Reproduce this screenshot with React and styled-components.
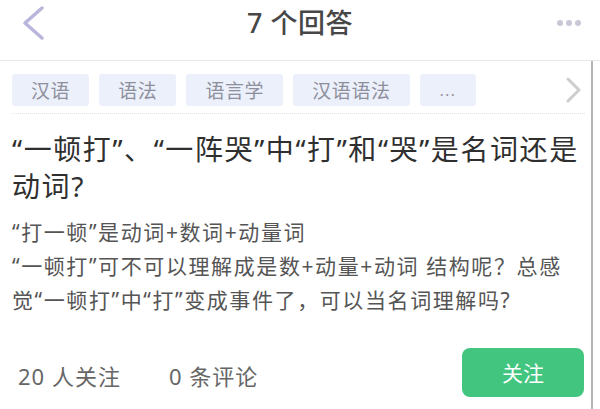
import React from "react";
import styled, { createGlobalStyle } from "styled-components";

const GlobalStyle = createGlobalStyle`
  html, body {
    margin: 0;
    padding: 0;
    background: #ffffff;
  }
  body {
    font-family: "Noto Sans", "Noto Sans CJK SC", sans-serif;
    overflow: hidden;
  }
`;

const Page = styled.div`
  width: 600px;
  height: 409px;
  display: flex;
  flex-direction: column;
  background: #fff;
`;

const Header = styled.header`
  height: 60px;
  flex-shrink: 0;
  display: grid;
  grid-template-columns: 80px 1fr 80px;
  align-items: center;
  border-bottom: 1px solid #e8e8e8;
`;

const BackButton = styled.div`
  padding-left: 22px;
  margin-top: -14px;
  display: flex;
  align-items: center;
`;

const Title = styled.h1`
  margin: -14px 0 0;
  text-align: center;
  font-size: 27px;
  font-weight: 500;
  color: #474747;
  line-height: 60px;
  letter-spacing: 0.5px;
`;

const More = styled.div`
  display: flex;
  justify-content: flex-end;
  gap: 3px;
  padding-right: 19px;
  margin-top: -14px;
  span {
    width: 6px;
    height: 6px;
    border-radius: 50%;
    background: #c9c8d6;
  }
`;

const Main = styled.main`
  flex: 1;
  width: 579px;
  padding-left: 12px;
  border-right: 2px solid #b4b4b4;
  display: flex;
  flex-direction: column;
`;

const TagRow = styled.div`
  display: flex;
  align-items: center;
  gap: 10px;
  padding: 13px 0 7px;
  border-bottom: 1px dotted #e4e4e8;
  margin-right: 6px;
`;

const Tag = styled.span`
  height: 32px;
  padding: 0 ${p => (p.$more ? 20 : 19)}px;
  border-radius: 3px;
  background: #ebf0fb;
  color: #8e8f9c;
  font-size: ${p => (p.$more ? 15 : 19)}px;
  display: flex;
  align-items: center;
  letter-spacing: ${p => (p.$more ? 1.5 : 0.6)}px;
`;

const NextArrow = styled.div`
  margin-left: auto;
  margin-right: 3px;
  display: flex;
`;

const Question = styled.h2`
  margin: 17px 0 0;
  font-size: 28px;
  line-height: 37px;
  font-weight: 400;
  color: #2f2f2f;
  letter-spacing: 1.6px;
`;

const Desc = styled.p`
  margin: 10px 0 0;
  font-size: 21px;
  line-height: 34px;
  color: #555;
  letter-spacing: 1.6px;
`;

const Footer = styled.div`
  margin-top: 31px;
  display: flex;
  align-items: center;
  padding-left: 6px;
  padding-right: 7px;
`;

const Stat = styled.span`
  font-size: 22px;
  color: #666;
  margin-right: 48px;
  margin-top: 4px;
  letter-spacing: 1px;
`;

const FollowButton = styled.button`
  margin-left: auto;
  width: 122px;
  height: 49px;
  border: none;
  border-radius: 8px;
  background: #41c57f;
  color: #fff;
  font-family: inherit;
  font-size: 21px;
  padding-bottom: 2px;
`;

export default function App() {
  const tags = ["汉语", "语法", "语言学", "汉语语法"];
  return (
    <Page>
      <GlobalStyle />
      <Header>
        <BackButton>
          <svg width="24" height="36" viewBox="0 0 24 36">
            <polyline
              points="20,3 3,18 20,33"
              fill="none"
              stroke="#b9b6dc"
              strokeWidth="3.5"
              strokeLinecap="round"
              strokeLinejoin="round"
            />
          </svg>
        </BackButton>
        <Title>7 个回答</Title>
        <More>
          <span />
          <span />
          <span />
        </More>
      </Header>
      <Main>
        <TagRow>
          {tags.map(t => (
            <Tag key={t}>{t}</Tag>
          ))}
          <Tag $more>...</Tag>
          <NextArrow>
            <svg width="16" height="26" viewBox="0 0 16 26">
              <polyline
                points="2,2 13,13 2,24"
                fill="none"
                stroke="#cdcdcd"
                strokeWidth="3"
                strokeLinecap="round"
                strokeLinejoin="round"
              />
            </svg>
          </NextArrow>
        </TagRow>
        <Question>
          “一顿打”、“一阵哭”中“打”和“哭”是名词还是
          <br />
          动词?
        </Question>
        <Desc>
          “打一顿”是动词+数词+动量词
          <br />
          “一顿打”可不可以理解成是数+动量+动词 结构呢？总感
          <br />
          觉“一顿打”中“打”变成事件了，可以当名词理解吗?
        </Desc>
        <Footer>
          <Stat>20 人关注</Stat>
          <Stat>0 条评论</Stat>
          <FollowButton>关注</FollowButton>
        </Footer>
      </Main>
    </Page>
  );
}
